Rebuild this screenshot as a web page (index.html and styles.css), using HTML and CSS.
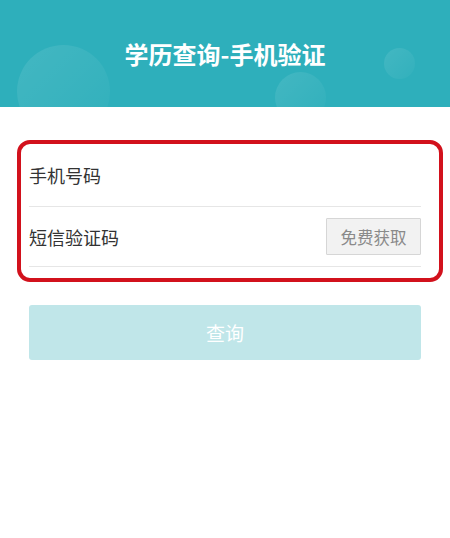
FILE: index.html
```html
<!DOCTYPE html>
<html lang="zh-CN">
<head>
<meta charset="utf-8">
<title>学历查询-手机验证</title>
<link rel="stylesheet" href="styles.css">
</head>
<body>
<div class="page">
  <header class="header">
    <span class="bubble bubble-big"></span>
    <span class="bubble bubble-mid"></span>
    <span class="bubble bubble-small"></span>
    <h1 class="title">学历查询-手机验证</h1>
  </header>
  <main class="content">
    <form class="form">
      <div class="row row-first">
        <label class="label">手机号码</label>
      </div>
      <div class="row">
        <label class="label">短信验证码</label>
        <button type="button" class="code-btn">免费获取</button>
      </div>
    </form>
    <button type="button" class="query-btn">查询</button>
  </main>
</div>
</body>
</html>
```

FILE: styles.css
```css
html, body {
  margin: 0;
  padding: 0;
  background: #ffffff;
}

body {
  font-family: "Noto Sans CJK SC", "Noto Sans", sans-serif;
  color: #333333;
}

.page {
  width: 450px;
  min-height: 538px;
  background: #ffffff;
}

.header {
  position: relative;
  height: 107px;
  background: #2eafbb;
  display: flex;
  align-items: center;
  justify-content: center;
  overflow: hidden;
}

.title {
  position: relative;
  margin: 0;
  font-size: 24px;
  font-weight: 700;
  color: #ffffff;
  letter-spacing: 0;
}

.bubble {
  position: absolute;
  border-radius: 50%;
  background: linear-gradient(135deg, rgba(255, 255, 255, 0.1), rgba(255, 255, 255, 0.01));
}

.bubble-big {
  left: 17px;
  top: 45px;
  width: 93px;
  height: 93px;
}

.bubble-mid {
  left: 275px;
  top: 72px;
  width: 51px;
  height: 51px;
}

.bubble-small {
  left: 384px;
  top: 48px;
  width: 31px;
  height: 31px;
  background: linear-gradient(135deg, rgba(255, 255, 255, 0.1), rgba(255, 255, 255, 0.02));
}

.content {
  padding: 37px 29px 0 29px;
}

.form {
  position: relative;
  margin: 0;
}

.form::after {
  content: "";
  position: absolute;
  left: -12px;
  right: -22px;
  top: -4px;
  bottom: -15px;
  border: 4px solid #d2111c;
  border-radius: 13px;
  pointer-events: none;
}

.row {
  display: flex;
  align-items: center;
  justify-content: space-between;
  height: 60px;
  border-bottom: 1px solid #e6e6e6;
  box-sizing: border-box;
}

.row-first {
  height: 63px;
}

.label {
  font-size: 18px;
  color: #333333;
}

.code-btn {
  width: 95px;
  height: 37px;
  padding: 0;
  background: #f2f2f2;
  border: 1px solid #d6d6d6;
  border-radius: 1px;
  font-family: "Noto Sans CJK SC", "Noto Sans", sans-serif;
  font-size: 16.5px;
  color: #8a8a8a;
}

.query-btn {
  display: block;
  width: 100%;
  height: 55px;
  margin-top: 38px;
  padding: 0;
  border: none;
  border-radius: 3px;
  background: #c0e6e9;
  color: #ffffff;
  font-family: "Noto Sans CJK SC", "Noto Sans", sans-serif;
  font-size: 19px;
}
```
